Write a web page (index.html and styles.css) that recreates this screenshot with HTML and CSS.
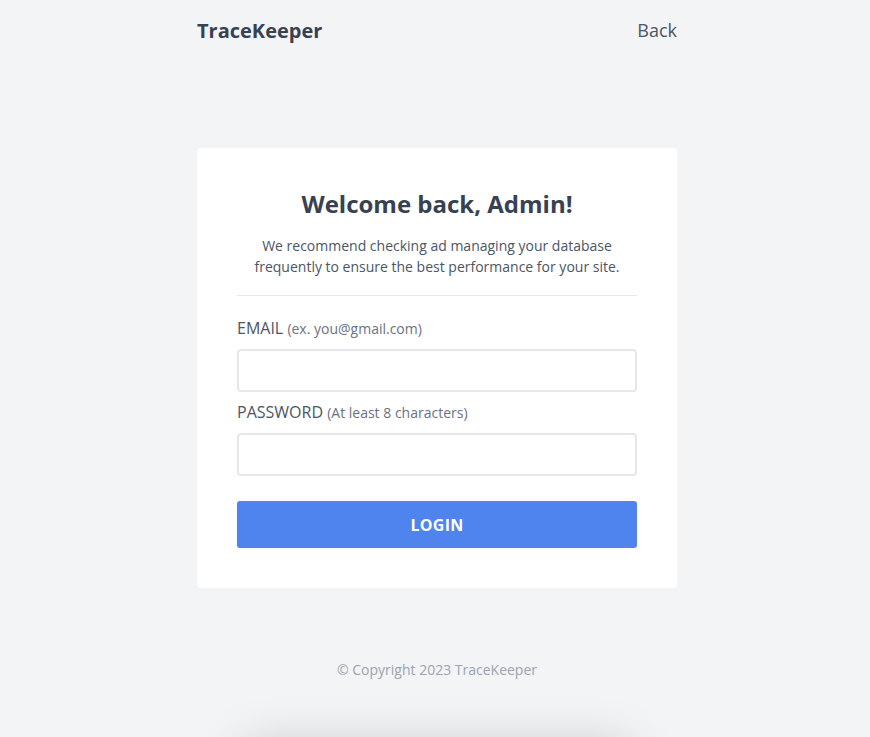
FILE: index.html
```html
<!DOCTYPE html>
<html lang="en">
<head>
<meta charset="utf-8">
<title>TraceKeeper - Login</title>
<link rel="stylesheet" href="styles.css">
</head>
<body>
<div class="page">
  <header class="topbar">
    <div class="brand">TraceKeeper</div>
    <a class="back" href="#">Back</a>
  </header>
  <main class="card">
    <h1 class="title">Welcome back, Admin!</h1>
    <p class="lead">We recommend checking ad managing your database frequently to ensure the best performance for your site.</p>
    <hr class="divider">
    <form class="form">
      <label class="label">EMAIL <span class="hint">(ex. you@gmail.com)</span></label>
      <input class="input" type="email">
      <label class="label label-second">PASSWORD <span class="hint">(At least 8 characters)</span></label>
      <input class="input" type="password">
      <button class="btn" type="button">LOGIN</button>
    </form>
  </main>
  <footer class="footer">© Copyright 2023 TraceKeeper</footer>
  <div class="floater"></div>
</div>
</body>
</html>
```

FILE: styles.css
```css
* { box-sizing: border-box; }
html, body {
  margin: 0;
  padding: 0;
  background: #f3f4f6;
  font-family: "Open Sans", "Noto Sans", sans-serif;
  color: #374151;
  overflow: hidden;
  height: 100%;
}
body { padding-left: 4px; }
.page {
  width: 480px;
  margin: 0 auto;
  display: flex;
  flex-direction: column;
}
.topbar {
  height: 60px;
  display: flex;
  align-items: center;
  justify-content: space-between;
}
.brand {
  font-size: 20px;
  font-weight: 700;
  color: #374151;
}
.back {
  font-size: 18px;
  color: #4b5563;
  text-decoration: none;
}
.card {
  margin-top: 88px;
  background: #fff;
  border-radius: 4px;
  padding: 40px;
}
.title {
  margin: 0;
  text-align: center;
  font-size: 24px;
  line-height: 32px;
  font-weight: 700;
  color: #374151;
}
.lead {
  margin: 15px 0 0;
  text-align: center;
  font-size: 14px;
  line-height: 21px;
  color: #4b5563;
}
.divider {
  border: 0;
  border-top: 1px solid #e5e7eb;
  margin: 18px 0 0;
}
.form {
  display: flex;
  flex-direction: column;
  margin-top: 22px;
}
.label {
  font-size: 16px;
  line-height: 20px;
  color: #4b5563;
}
.label-second { margin-top: 10px; }
.hint {
  font-size: 14px;
  color: #6b7280;
}
.input {
  margin-top: 10px;
  height: 43px;
  border: 2px solid #e5e7eb;
  border-radius: 4px;
  background: #fff;
  outline: none;
}
.btn {
  margin-top: 25px;
  height: 47px;
  border: 0;
  border-radius: 3px;
  background: #4f83ee;
  color: #fff;
  font-family: inherit;
  font-size: 16px;
  font-weight: 700;
  letter-spacing: 0.3px;
}
.footer {
  margin-top: 72px;
  text-align: center;
  font-size: 14px;
  line-height: 20px;
  color: #9ca3af;
}
.floater {
  margin: 70px auto 0;
  width: 380px;
  height: 200px;
  background: #f3f4f6;
  border-radius: 8px;
  box-shadow: 0 0 50px 5px rgba(0,0,0,0.18);
}
```
